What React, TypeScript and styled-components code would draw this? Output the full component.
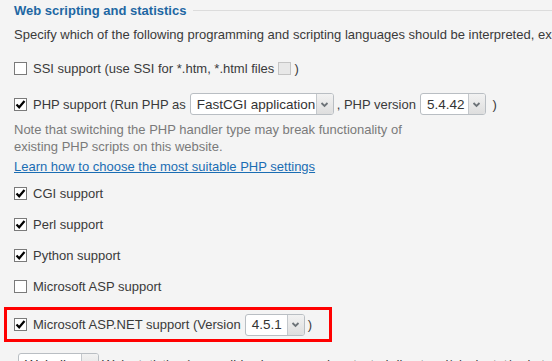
import React from "react";
import styled, { createGlobalStyle } from "styled-components";

const Global = createGlobalStyle`
  html, body { margin: 0; padding: 0; background: #f4f4f4; }
  body { font-family: "Liberation Sans", Arial, sans-serif; font-size: 13px; color: #3a3a3a; overflow: hidden; }
`;

const Page = styled.div`
  width: 552px;
  height: 361px;
  overflow: hidden;
  padding-left: 14px;
  box-sizing: border-box;
  display: flex;
  flex-direction: column;
  & > * { flex: none; }
`;

const Legend = styled.div`
  height: 20px;
  display: flex;
  align-items: center;
  gap: 7px;
`;

const LegendTitle = styled.span`
  font-weight: bold;
  color: #1e67a3;
  font-size: 13px;
  white-space: nowrap;
`;

const LegendLine = styled.div`
  flex: 1;
  height: 1px;
  background: #dcdcdc;
`;

const Row = styled.div<{ $h: number; $mt?: number }>`
  height: ${(p) => p.$h}px;
  margin-top: ${(p) => p.$mt ?? 0}px;
  display: flex;
  align-items: center;
  white-space: nowrap;
`;

const Highlight = styled.div`
  height: 35px;
  width: 328px;
  box-sizing: border-box;
  margin-top: 5px;
  margin-left: -10px;
  padding-left: 7px;
  border: 3px solid #ff0000;
  display: flex;
  align-items: center;
  white-space: nowrap;
`;

const Note = styled.div`
  color: #7a7a7a;
  line-height: 17px;
  height: 34px;
  padding-top: 1px;
`;

const Link = styled.a`
  color: #1a6db3;
  text-decoration: underline;
`;

const Box = styled.span<{ $disabled?: boolean }>`
  width: 13px;
  height: 13px;
  box-sizing: border-box;
  border: 1px solid ${(p) => (p.$disabled ? "#c4c4c4" : "#7a7a7a")};
  background: ${(p) => (p.$disabled ? "#e8e8e8" : "#fff")};
  display: inline-flex;
  align-items: center;
  justify-content: center;
  flex: none;
`;

const Label = styled.span`
  margin-left: 6px;
  display: inline-flex;
  align-items: center;
`;

const SelectBox = styled.span<{ $w: number }>`
  width: ${(p) => p.$w}px;
  height: 22px;
  box-sizing: border-box;
  border: 1px solid #b9bec3;
  border-radius: 3px;
  background: #fff;
  display: inline-flex;
  align-items: stretch;
  margin: 0 3px 0 4px;
  overflow: hidden;
  flex: none;
`;

const SelectText = styled.span`
  flex: 1;
  padding-left: 6px;
  display: flex;
  align-items: center;
  color: #333;
  overflow: hidden;
  font-size: 13.5px;
`;

const SelectBtn = styled.span`
  width: 16px;
  border-left: 1px solid #c4c8cc;
  background: linear-gradient(#f2f2f2, #dedede);
  display: flex;
  align-items: center;
  justify-content: center;
`;

const Check = () => (
  <svg width="11" height="11" viewBox="0 0 11 11">
    <path d="M1.5 5.5 L4.2 8.3 L9.5 2" fill="none" stroke="#000" strokeWidth="2.2" />
  </svg>
);

const Chevron = () => (
  <svg width="9" height="7" viewBox="0 0 9 7">
    <path d="M1.5 2 L4.5 5 L7.5 2" fill="none" stroke="#6d7378" strokeWidth="1.8" />
  </svg>
);

const Checkbox = ({ checked, disabled }: { checked?: boolean; disabled?: boolean }) => (
  <Box $disabled={disabled}>{checked ? <Check /> : null}</Box>
);

const Select = ({ w, value }: { w: number; value: string }) => (
  <SelectBox $w={w}>
    <SelectText>{value}</SelectText>
    <SelectBtn>
      <Chevron />
    </SelectBtn>
  </SelectBox>
);

export default function App() {
  return (
    <>
      <Global />
      <Page>
        <Legend>
          <LegendTitle>Web scripting and statistics</LegendTitle>
          <LegendLine />
        </Legend>
        <Row $h={28}>
          Specify which of the following programming and scripting languages should be interpreted, executed or otherwise processed by the web server.
        </Row>
        <Row $h={40}>
          <Checkbox />
          <Label>
            SSI support (use SSI for *.htm, *.html files&nbsp;
            <Checkbox disabled />
            &nbsp;)
          </Label>
        </Row>
        <Row $h={32}>
          <Checkbox checked />
          <Label>
            PHP support (Run PHP as
            <Select w={144} value="FastCGI application" />
            , PHP version
            <Select w={66} value="5.4.42" />
            &nbsp;)
          </Label>
        </Row>
        <Note>
          Note that switching the PHP handler type may break functionality of
          <br />
          existing PHP scripts on this website.
        </Note>
        <Row $h={23}>
          <Link>Learn how to choose the most suitable PHP settings</Link>
        </Row>
        <Row $h={31}>
          <Checkbox checked />
          <Label>CGI support</Label>
        </Row>
        <Row $h={31}>
          <Checkbox checked />
          <Label>Perl support</Label>
        </Row>
        <Row $h={31}>
          <Checkbox checked />
          <Label>Python support</Label>
        </Row>
        <Row $h={31}>
          <Checkbox />
          <Label>Microsoft ASP support</Label>
        </Row>
        <Highlight>
          <Checkbox checked />
          <Label>
            Microsoft ASP.NET support (Version
            <Select w={60} value="4.5.1" />)
          </Label>
        </Highlight>
        <Row $h={22} $mt={11}>
          <Select w={81} value="Webalizer" />
          Web statistics (accessible via password-protected directory '/plesk-stat/webstat/')
        </Row>
      </Page>
    </>
  );
}
